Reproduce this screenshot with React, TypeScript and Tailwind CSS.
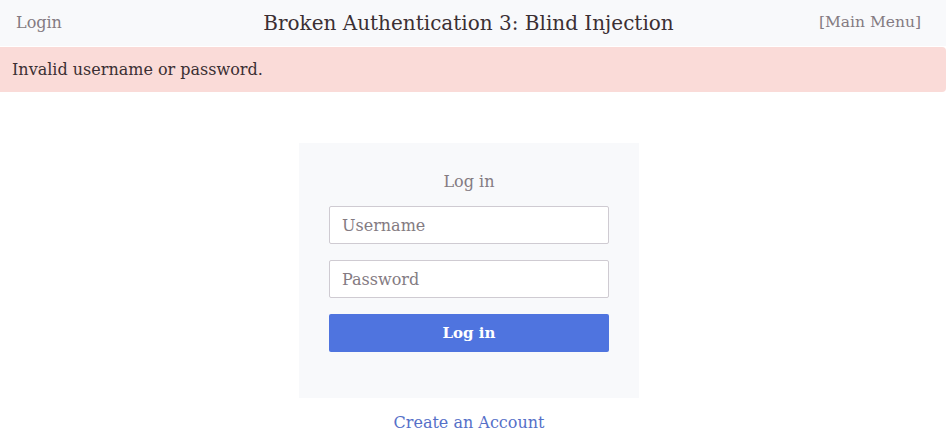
export default function App() {
  return (
    <div className="min-h-screen bg-white font-['DejaVu_Serif',serif] text-[#3b2f33]">
      <header className="grid h-[46px] grid-cols-[1fr_auto_1fr] items-center bg-[#f8f9fb] pl-4 pr-[25px]">
        <span className="text-[16px] text-[#847b82]">Login</span>
        <h1 className="whitespace-nowrap text-center text-[20px] text-[#3b2f33]">
          Broken Authentication 3: Blind Injection
        </h1>
        <span className="text-right text-[15.5px] text-[#847b82]">[Main Menu]</span>
      </header>
      <div className="mt-px flex h-[45px] items-center rounded-r-[4px] bg-[#fadbd8] px-3 text-[16px] text-[#3b2f33]">
        Invalid username or password.
      </div>
      <div className="flex flex-col items-center pr-[8px] pt-[51px]">
        <form className="flex w-[340px] flex-col items-center bg-[#f8f9fb] pb-[46px] pt-[27px]">
          <div className="mb-[12px] text-[16px] text-[#847b82]">Log in</div>
          <input
            placeholder="Username"
            className="mb-[16px] h-[38px] w-[280px] rounded-[2px] border border-[#cfcbd2] bg-white px-3 text-[16px] outline-none placeholder:text-[#847b82]"
          />
          <input
            type="password"
            placeholder="Password"
            className="mb-[16px] h-[38px] w-[280px] rounded-[2px] border border-[#cfcbd2] bg-white px-3 text-[16px] outline-none placeholder:text-[#847b82]"
          />
          <button
            type="button"
            className="h-[38px] w-[280px] rounded-[2px] bg-[#4f74df] text-[15px] font-bold text-white"
          >
            Log in
          </button>
        </form>
        <a href="#" className="mt-[13px] text-[16px] text-[#5670c8]">
          Create an Account
        </a>
      </div>
    </div>
  );
}
